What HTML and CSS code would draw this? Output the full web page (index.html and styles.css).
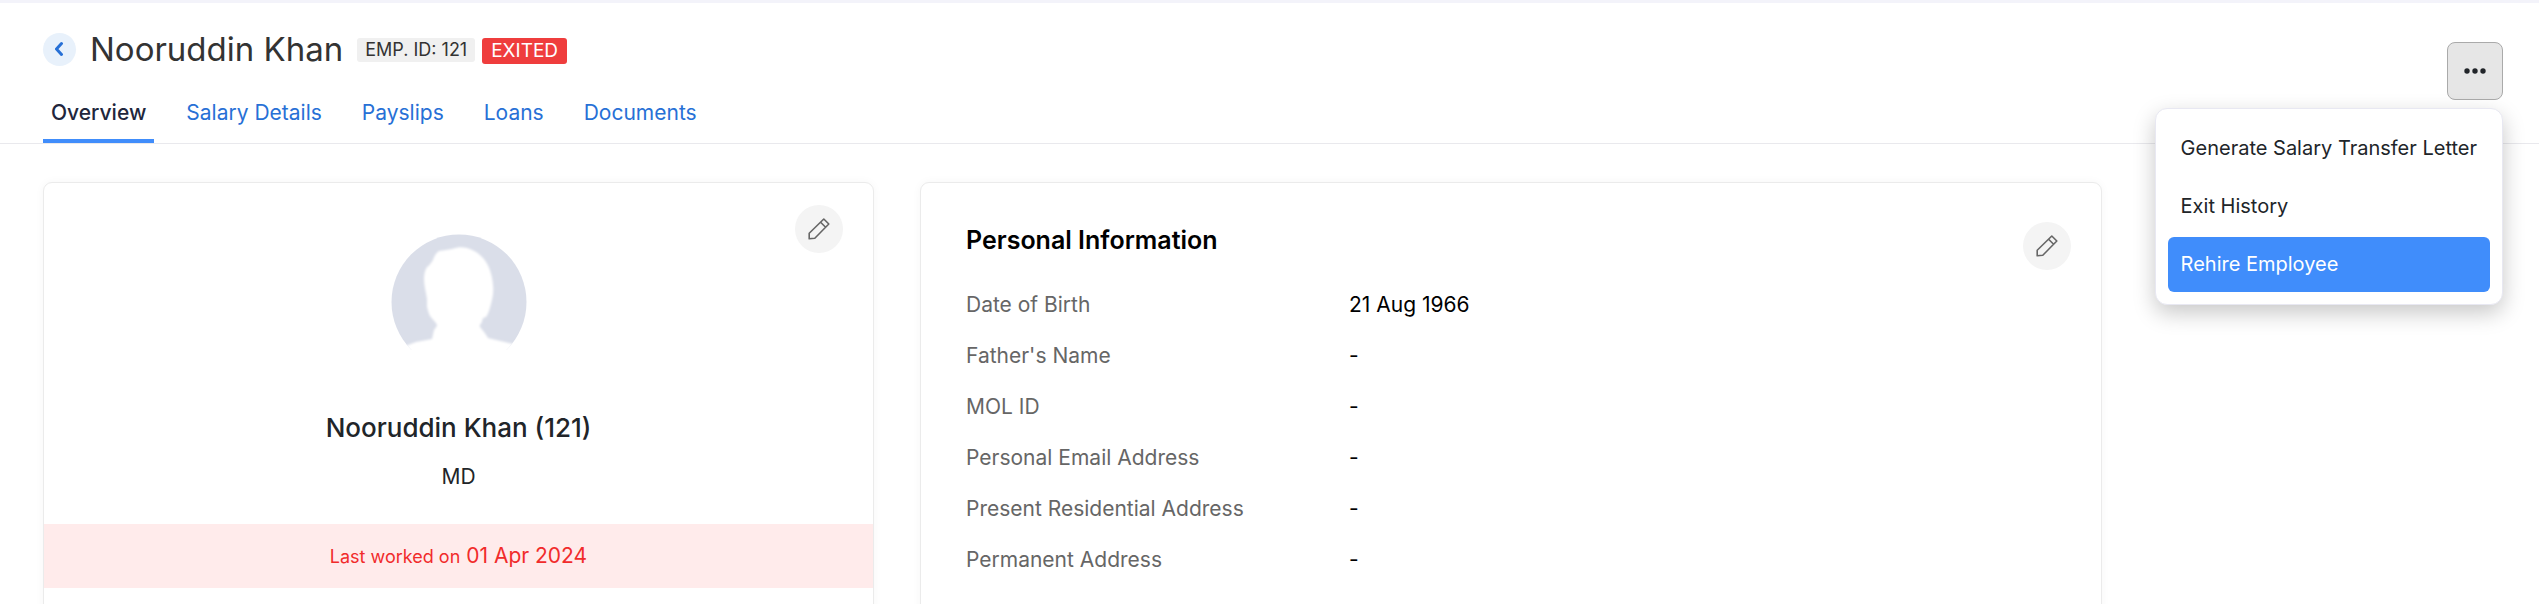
FILE: index.html
```html
<!DOCTYPE html>
<html lang="en">
<head>
<meta charset="utf-8">
<meta name="viewport" content="width=device-width, initial-scale=1">
<title>Nooruddin Khan</title>
<link rel="stylesheet" href="styles.css">
</head>
<body>
<header class="page-header">
  <div class="title-row">
    <a class="back" href="#" aria-label="Back">
      <svg width="10" height="16" viewBox="0 0 10 16" fill="none" stroke="currentColor" stroke-width="3" stroke-linecap="round" stroke-linejoin="round"><path d="M6.5 2.5L1.5 8l5 5.5"/></svg>
    </a>
    <h1 class="name">Nooruddin Khan</h1>
    <div class="badges">
      <span class="badge badge-id">EMP. ID: 121</span>
      <span class="badge badge-exited">EXITED</span>
    </div>
  </div>
  <nav class="tabs">
    <a class="tab tab-active" href="#">Overview</a>
    <a class="tab" href="#">Salary Details</a>
    <a class="tab" href="#">Payslips</a>
    <a class="tab" href="#">Loans</a>
    <a class="tab" href="#">Documents</a>
  </nav>
  <div class="actions">
    <button class="more" type="button" aria-label="More actions" aria-expanded="true">
      <svg width="24" height="8" viewBox="0 0 24 8" fill="currentColor"><circle cx="4" cy="4" r="2.7"/><circle cx="12" cy="4" r="2.7"/><circle cx="20" cy="4" r="2.7"/></svg>
    </button>
    <div class="menu">
      <button class="menu-item" type="button">Generate Salary Transfer Letter</button>
      <button class="menu-item" type="button">Exit History</button>
      <button class="menu-item menu-item-active" type="button">Rehire Employee</button>
    </div>
  </div>
</header>
<main class="content">
  <section class="card profile">
    <button class="edit edit-profile" type="button" aria-label="Edit profile">
      <svg width="24" height="24" viewBox="0 0 24 24" fill="none" stroke="currentColor" stroke-width="1.6" stroke-linejoin="round"><path d="M2.2 21.8v-5.6L16.8 2l5 5L7.8 21.2zM13.6 5.2l5 5"/></svg>
    </button>
    <svg class="avatar" width="136" height="136" viewBox="0 0 136 136" aria-hidden="true">
      <defs>
        <clipPath id="disc"><circle cx="68" cy="68" r="67.5"/></clipPath>
        <filter id="soft" x="-10%" y="-10%" width="120%" height="120%"><feGaussianBlur stdDeviation="0.8"/></filter>
      </defs>
      <g clip-path="url(#disc)">
        <rect width="136" height="116" fill="#dadee9"/>
        <path filter="url(#soft)" fill="#fff" d="M48 17C53 16 57 16 61 15C67 13 71 13 76 14C82 16 86 18 90 22C97 28 101 39 102 51C103 60 101 65 100 70L98 77C97 79 96 82 95 83C92 83 91 86 91 88C90 90 88 91 89 93C92 97 95 100 97 104L101 105L122 110L140 114V140H-4V118L17 111L25 108L41 105L43 96C44 94 46 93 46 91C45 88 42 86 39 82C37 78 37 76 36 73L36 65C35 58 33 52 33 45C33 40 34 36 36 33C38 32 40 29 42 26C43 23 44 20 48 17Z"/>
      </g>
    </svg>
    <h2 class="profile-name">Nooruddin Khan (121)</h2>
    <p class="profile-role">MD</p>
    <p class="notice"><span class="notice-label">Last worked on</span> 01 Apr 2024</p>
  </section>
  <section class="card personal">
    <div class="card-head">
      <h2 class="card-title">Personal Information</h2>
      <button class="edit" type="button" aria-label="Edit personal information">
        <svg width="24" height="24" viewBox="0 0 24 24" fill="none" stroke="currentColor" stroke-width="1.6" stroke-linejoin="round"><path d="M2.2 21.8v-5.6L16.8 2l5 5L7.8 21.2zM13.6 5.2l5 5"/></svg>
      </button>
    </div>
    <dl class="details">
      <dt>Date of Birth</dt><dd>21 Aug 1966</dd>
      <dt>Father's Name</dt><dd>-</dd>
      <dt>MOL ID</dt><dd>-</dd>
      <dt>Personal Email Address</dt><dd>-</dd>
      <dt>Present Residential Address</dt><dd>-</dd>
      <dt>Permanent Address</dt><dd>-</dd>
    </dl>
  </section>
</main>
</body>
</html>
```
FILE: styles.css
```css
* { box-sizing: border-box; }

body {
  margin: 0;
  min-height: 100vh;
  overflow: hidden;
  background: #fff;
  color: #212529;
  font: 21px/32px Inter, "Liberation Sans", sans-serif;
}

h1, h2, p, dl, dd { margin: 0; }
button { font: inherit; cursor: pointer; }
a { text-decoration: none; }

.page-header {
  position: relative;
  padding: 24px 43px 0;
  border-top: 3px solid #f3f3fa;
  border-bottom: 1px solid #e9e9ed;
}

.title-row {
  display: flex;
  align-items: center;
  height: 44px;
}

.back {
  display: grid;
  place-items: center;
  width: 33px;
  height: 33px;
  margin-right: 14px;
  border-radius: 50%;
  background: #e8f1fb;
  color: #2770d6;
}

.name {
  font-size: 33px;
  font-weight: 400;
  line-height: 42px;
  color: #333;
}

.badges {
  display: flex;
  align-items: flex-start;
  gap: 7px;
  margin: 4px 0 0 14px;
}

.badge {
  border-radius: 3px;
  font-size: 18px;
}

.badge-id {
  padding: 0 8px;
  line-height: 24px;
  background: #f0f0f0;
  color: #333;
}

.badge-exited {
  padding: 0 9px;
  font-size: 19px;
  line-height: 26px;
  background: #ef3d3d;
  color: #fff;
}

.tabs {
  display: flex;
  gap: 24px;
  padding-top: 26px;
}

.tab {
  padding: 0 8px 10px;
  border-bottom: 4px solid transparent;
  color: #2770d6;
}

.tab-active {
  border-color: #408dfb;
  color: #21263c;
  font-weight: 500;
}

.actions {
  position: absolute;
  top: 39px;
  right: 36px;
}

.more {
  display: grid;
  place-items: center;
  width: 56px;
  height: 58px;
  margin-left: auto;
  padding: 0;
  border: 1px solid #aaa;
  border-radius: 8px;
  background: #e6e6e6;
  color: #212529;
}

.menu {
  position: absolute;
  top: 66px;
  right: 0;
  z-index: 1;
  display: flex;
  flex-direction: column;
  gap: 3px;
  padding: 12px;
  border: 1px solid #e8e8f2;
  border-radius: 12px;
  background: #fff;
  box-shadow: 0 8px 22px rgba(0, 0, 0, 0.22);
}

.menu-item {
  padding: 0 13px;
  border: 0;
  border-radius: 6px;
  background: none;
  color: #212529;
  font-size: 20px;
  line-height: 55px;
  text-align: left;
  white-space: nowrap;
}

.menu-item-active {
  background: #408dfb;
  color: #fff;
}

.content {
  display: grid;
  grid-template-columns: 831fr 1182fr 348fr;
  gap: 46px;
  padding: 38px 43px;
}

.card {
  border: 1px solid #ebebeb;
  border-radius: 9px;
  background: #fff;
  box-shadow: 0 0 10px rgba(0, 0, 0, 0.04);
}

.profile {
  position: relative;
  display: flex;
  flex-direction: column;
  align-items: center;
  padding: 51px 0 48px;
}

.edit {
  display: grid;
  place-items: center;
  width: 48px;
  height: 48px;
  padding: 0;
  border: 0;
  border-radius: 50%;
  background: #f4f4f4;
  color: #666;
}

.edit-profile {
  position: absolute;
  top: 22px;
  right: 30px;
}

.profile-name {
  margin-top: 40px;
  font-size: 26px;
  font-weight: 500;
  line-height: 36px;
}

.profile-role {
  margin-top: 15px;
}

.notice {
  align-self: stretch;
  margin-top: 31px;
  padding: 16px;
  background: #ffebeb;
  color: #f12b2b;
  line-height: 31px;
  text-align: center;
}

.notice-label { font-size: 18px; }

.personal {
  padding: 39px 30px 48px 45px;
}

.card-head {
  display: flex;
  justify-content: space-between;
}

.card-title {
  color: #000;
  font-size: 25px;
  font-weight: 600;
  line-height: 36px;
}

.details {
  display: grid;
  grid-template-columns: 383px 1fr;
  row-gap: 19px;
  margin-top: 19px;
}

dt { color: #666; }
dd { color: #000; }
```
